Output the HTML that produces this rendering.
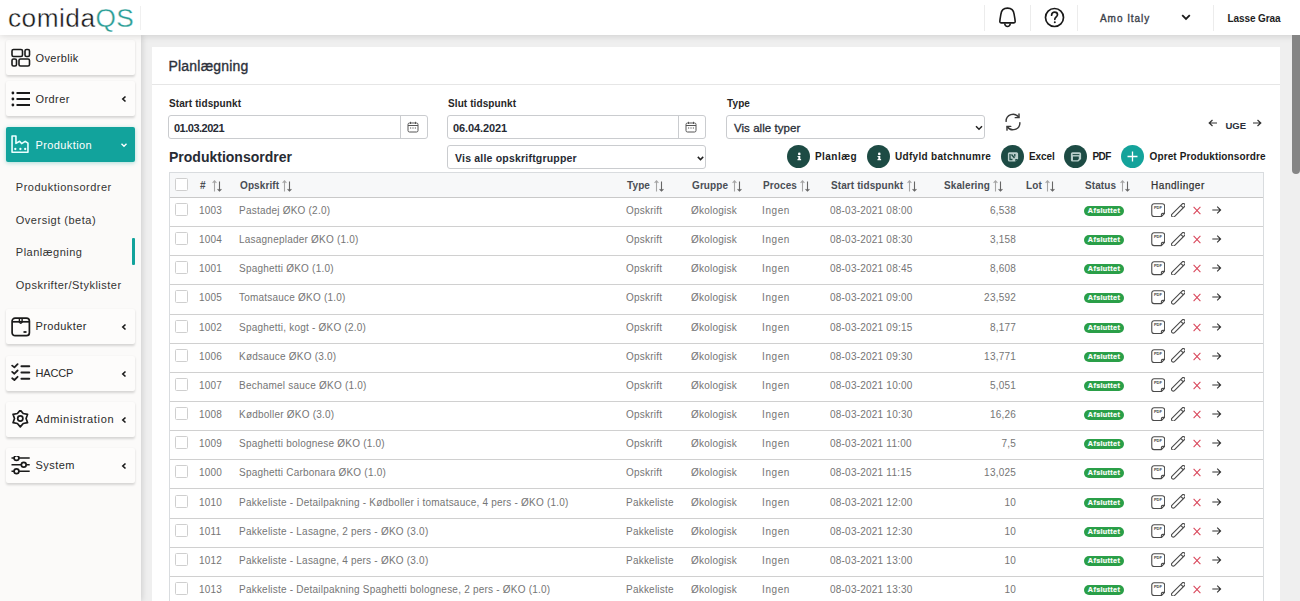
<!DOCTYPE html>
<html><head><meta charset="utf-8">
<style>
*{box-sizing:border-box;margin:0;padding:0}
html,body{width:1300px;height:601px;overflow:hidden;background:#efefef;font-family:"Liberation Sans",sans-serif;color:#222}
.abs{position:absolute}
#hdr{position:absolute;left:0;top:0;width:1300px;height:35px;background:#fff;z-index:5;box-shadow:0 1px 7px rgba(0,0,0,.14)}
#side{position:absolute;left:0;top:35px;width:141px;height:566px;background:#fbfaf9;z-index:3;box-shadow:1px 0 6px rgba(0,0,0,.15)}
#main{position:absolute;left:141px;top:35px;width:1159px;height:566px;background:#efefef;overflow:hidden}
#panel{position:absolute;left:11px;top:12px;width:1128px;height:600px;background:#fff}
#sb{position:absolute;left:1292px;top:35px;width:8px;height:139px;background:#858585;border-radius:0 0 4px 4px;z-index:6}
.box{position:absolute;left:6px;width:129px;height:35px;background:#fdfcfb;border-radius:2px;box-shadow:0 1.5px 2.5px rgba(0,0,0,.15)}
.box .lbl{position:absolute;left:29.5px;top:12px;font-size:11px;letter-spacing:.35px;color:#2a2a2a}
.box .chev{position:absolute;left:113.5px;top:13.5px;width:8px;height:8px}
.box svg.ic{position:absolute;left:5px;top:8px}
.sub{position:absolute;left:15.8px;font-size:11px;letter-spacing:.5px;color:#333}
.lab{position:absolute;font-weight:bold;font-size:10px;letter-spacing:.1px;color:#262626}
.inp{position:absolute;height:24px;border:1px solid #cacccf;border-radius:3px;background:#fff}
.inp .v{position:absolute;left:5px;top:6px;font-size:11px;color:#262a33;font-weight:bold;letter-spacing:-.1px}
.tbl{position:absolute;left:169px;top:172px;width:1095px;height:440px;border:1px solid #d9dcdf;border-bottom:0}
.th{position:absolute;left:0;top:0;width:1093px;height:25px;background:#f7f8f9;border-bottom:1px solid #c9c9c9}
.tr{position:absolute;left:0;width:1093px;height:29.15px;border-bottom:1px solid #d0d0d0}
.cell{position:absolute;white-space:nowrap}
.th .cell{top:7px;font-size:10px;font-weight:bold;color:#4a4e55;letter-spacing:.1px}
.tr .cell{top:7px;font-size:10px;color:#757575;letter-spacing:.22px}
.cb{position:absolute;left:5px;width:13px;height:13px;border:1px solid #cfcfcf;border-radius:1.5px;background:#fff}
.badge{position:absolute;left:915px;top:9px;width:40px;height:10px;border-radius:5px;background:#2a9f48;color:#fff;font-size:7.2px;font-weight:bold;text-align:center;line-height:10px;letter-spacing:.35px;-webkit-text-stroke:.15px #fff}
.srt{position:absolute;top:7px}
.ai{position:absolute;top:6px}
.circ{position:absolute;top:145px;width:23px;height:23px;border-radius:50%;background:#1d4b44}
.btxt{position:absolute;top:151px;font-size:10px;font-weight:bold;color:#1c1c1c;letter-spacing:-.1px}
</style></head><body>
<div id="hdr">
  <div class="abs" style="left:7.5px;top:4px;font-size:25px;letter-spacing:0.45px;color:#1a1a1a;transform:scaleX(1.05);transform-origin:0 0;-webkit-text-stroke:0.35px #fff">comida<span style="color:#2a9d95">QS</span></div>
  <div class="abs" style="left:140px;top:6px;width:1px;height:24px;background:#f0f0f0"></div>
  <div class="abs" style="left:984px;top:5px;width:1px;height:26px;background:#ececec"></div>
  <div class="abs" style="left:1030px;top:5px;width:1px;height:26px;background:#ececec"></div>
  <div class="abs" style="left:1077px;top:5px;width:1px;height:26px;background:#ececec"></div>
  <div class="abs" style="left:1213px;top:5px;width:1px;height:26px;background:#ececec"></div>
  <svg class="abs" style="left:998px;top:7px" width="20" height="21" viewBox="0 0 20 21"><path d="M1.8 14.6 C2 11.5 2.6 9.5 2.9 7.2 C3.3 3.6 5.8 1.1 9.5 1.1 C13.2 1.1 15.7 3.6 16.1 7.2 C16.4 9.5 17 11.5 17.2 14.6 C17.2 15.5 16.8 15.9 16 15.9 H3 C2.2 15.9 1.8 15.5 1.8 14.6 Z" fill="none" stroke="#1a1a1a" stroke-width="1.6" stroke-linejoin="round"/><path d="M6.6 16.3 C7 18.6 8.1 19.5 9.5 19.5 C10.9 19.5 12 18.6 12.4 16.3" fill="none" stroke="#1a1a1a" stroke-width="1.5"/></svg>
  <svg class="abs" style="left:1044px;top:7px" width="21" height="21" viewBox="0 0 21 21">
    <circle cx="10.5" cy="10.5" r="9" fill="none" stroke="#1a1a1a" stroke-width="1.7"/>
    <path d="M7.6 8.2 C7.6 6.2 9 5.2 10.6 5.2 C12.3 5.2 13.5 6.3 13.5 7.8 C13.5 9.8 10.8 10 10.8 12.3" fill="none" stroke="#1a1a1a" stroke-width="1.7" stroke-linecap="round"/>
    <circle cx="10.8" cy="15.3" r="1" fill="#1a1a1a"/>
  </svg>
  <div class="abs" style="left:1100px;top:13px;font-size:10px;letter-spacing:.95px;color:#3b3f4a;-webkit-text-stroke:.35px #3b3f4a">Amo Italy</div>
  <svg class="abs" style="left:1181px;top:14px" width="10" height="7" viewBox="0 0 10 7"><path d="M1.2 1.2 L5 5 L8.8 1.2" fill="none" stroke="#1a1a1a" stroke-width="1.8"/></svg>
  <div class="abs" style="left:1227.5px;top:13px;font-size:10px;color:#1e1e1e;font-weight:bold;letter-spacing:-.1px">Lasse Graa</div>
</div>

<div id="side">
  <div class="box" style="top:5px">
    <svg class="ic" width="20" height="20" viewBox="0 0 20 20"><g fill="none" stroke="#1a1a1a" stroke-width="1.6"><rect x="1" y="1.5" width="10.5" height="7" rx="1.5"/><rect x="14" y="1.5" width="4.5" height="7" rx="1.5"/><rect x="1" y="11" width="4.5" height="7" rx="1.5"/><rect x="8" y="11" width="10.5" height="7" rx="1.5"/></g></svg>
    <div class="lbl" style="letter-spacing:.36px">Overblik</div>
  </div>
  <div class="box" style="top:46px">
    <svg class="ic" width="20" height="20" viewBox="0 0 20 20"><g fill="#1a1a1a"><circle cx="1.9" cy="4" r="1.4"/><circle cx="1.9" cy="10" r="1.4"/><circle cx="1.9" cy="16" r="1.4"/></g><g stroke="#1a1a1a" stroke-width="1.8"><path d="M5.5 4H19M5.5 10H19M5.5 16H19"/></g></svg>
    <div class="lbl" style="letter-spacing:.42px">Ordrer</div>
    <svg class="chev" viewBox="0 0 8 8"><path d="M5.5 1.5 L2.8 4 L5.5 6.5" fill="none" stroke="#1a1a1a" stroke-width="1.6"/></svg>
  </div>
  <div class="box" style="top:92px;background:#12a39c;box-shadow:0 1px 4px rgba(18,163,156,.35)">
    <svg class="ic" width="20" height="21" viewBox="0 0 20 21"><g fill="none" stroke="#eaffff" stroke-width="1.6" stroke-linejoin="round"><path d="M1.05 17.2 V1.05 H4.95 V8.4 L8.6 6.3 L10.6 8.6 L14.2 6.3 L16.95 8.2 V17.2 Z"/></g><g fill="#eaffff"><circle cx="4.3" cy="14" r="1.15"/><circle cx="9.4" cy="14" r="1.15"/><circle cx="14.2" cy="14" r="1.15"/></g></svg>
    <div class="lbl" style="color:#fff;letter-spacing:.4px">Produktion</div>
    <svg class="chev" viewBox="0 0 8 8"><path d="M1.5 2.8 L4 5.2 L6.5 2.8" fill="none" stroke="#fff" stroke-width="1.4"/></svg>
  </div>
  <div class="sub" style="top:146px">Produktionsordrer</div>
  <div class="sub" style="top:179px">Oversigt (beta)</div>
  <div class="sub" style="top:211px">Planlægning</div>
  <div class="sub" style="top:243.5px">Opskrifter/Styklister</div>
  <div class="abs" style="left:132px;top:203px;width:3px;height:27px;background:#12a39c;border-radius:1px"></div>

  <div class="box" style="top:274px">
    <svg class="ic" width="20" height="20" viewBox="0 0 20 20"><g fill="none" stroke="#1a1a1a" stroke-width="1.7"><rect x="1.1" y="1.1" width="17.3" height="17.6" rx="3"/><path d="M1.1 4.8H18.4"/><path d="M8.4 1.2V5.2Q9.75 7.2 11.1 5.2V1.2" stroke-width="1.4"/></g><path d="M12.5 15H15.5" stroke="#1a1a1a" stroke-width="1.8"/></svg>
    <div class="lbl" style="top:11px;letter-spacing:.39px">Produkter</div>
    <svg class="chev" viewBox="0 0 8 8"><path d="M5.5 1.5 L2.8 4 L5.5 6.5" fill="none" stroke="#1a1a1a" stroke-width="1.6"/></svg>
  </div>
  <div class="box" style="top:321px">
    <svg class="ic" style="top:7px" width="20" height="20" viewBox="0 0 20 20"><g fill="none" stroke="#1f1f1f" stroke-linecap="round" stroke-linejoin="round"><path d="M1.2 2.6L3.4 4.4L6.6 1.2M1.2 8.9L3.4 10.7L6.6 7.5M1.2 15.2L3.4 17L6.6 13.8" stroke-width="1.8"/><path d="M10.4 3.25H18.3M10.4 9.5H18.3M10.4 15.75H18.3" stroke-width="1.9"/></g></svg>
    <div class="lbl" style="top:10.5px;letter-spacing:-.15px">HACCP</div>
    <svg class="chev" viewBox="0 0 8 8"><path d="M5.5 1.5 L2.8 4 L5.5 6.5" fill="none" stroke="#1a1a1a" stroke-width="1.6"/></svg>
  </div>
  <div class="box" style="top:367px">
    <svg class="ic" width="20" height="20" viewBox="0 0 20 20"><g fill="none" stroke="#1a1a1a" stroke-width="1.7" stroke-linejoin="round"><path d="M9.30 0.10 L12.20 3.48 L16.57 4.30 L15.10 8.50 L16.57 12.70 L12.20 13.52 L9.30 16.90 L6.40 13.52 L2.03 12.70 L3.50 8.50 L2.03 4.30 L6.40 3.48 Z"/><circle cx="9.3" cy="8.5" r="2.6"/></g></svg>
    <div class="lbl" style="top:11px;letter-spacing:.64px">Administration</div>
    <svg class="chev" viewBox="0 0 8 8"><path d="M5.5 1.5 L2.8 4 L5.5 6.5" fill="none" stroke="#1a1a1a" stroke-width="1.6"/></svg>
  </div>
  <div class="box" style="top:413px">
    <svg class="ic" width="20" height="20" viewBox="0 0 20 20"><g fill="none" stroke="#1a1a1a" stroke-width="1.7"><path d="M0.5 2H3M8 2H18.7M0.5 8.75H10.3M15.2 8.75H18.7M0.5 15.25H3M8 15.25H18.7"/><circle cx="5.5" cy="2" r="2.4"/><circle cx="12.75" cy="8.75" r="2.4"/><circle cx="5.5" cy="15.25" r="2.4"/></g></svg>
    <div class="lbl" style="top:11px;letter-spacing:.47px">System</div>
    <svg class="chev" viewBox="0 0 8 8"><path d="M5.5 1.5 L2.8 4 L5.5 6.5" fill="none" stroke="#1a1a1a" stroke-width="1.6"/></svg>
  </div>
</div>

<div id="main">
  <div id="panel"></div>
</div>
<div id="sb"></div>

<!-- panel content (absolute in page coords) -->
<div class="abs" style="left:152px;top:84px;width:1128px;height:1px;background:#e6e6e6"></div>
<div class="abs" style="left:168.5px;top:58px;font-size:14px;color:#2c313a;letter-spacing:.2px;-webkit-text-stroke:.35px #2c313a">Planlægning</div>

<div class="lab" style="left:169px;top:98px">Start tidspunkt</div>
<div class="lab" style="left:448px;top:98px">Slut tidspunkt</div>
<div class="lab" style="left:727px;top:98px">Type</div>

<div class="inp" style="left:168px;top:115px;width:260px"><div class="v" style="letter-spacing:-.5px">01.03.2021</div><div class="abs" style="left:230.5px;top:0;width:1px;height:22px;background:#cacccf"></div>
  <svg class="abs" style="left:238px;top:4.8px" width="12" height="12" viewBox="0 0 12 12"><g fill="none" stroke="#555" stroke-width="1"><rect x="1" y="2" width="10" height="9" rx="1.5"/><path d="M1 4.5H11M3.5 0.8V3M8.5 0.8V3"/></g><g fill="#555"><rect x="3" y="6.5" width="1.2" height="1"/><rect x="5.4" y="6.5" width="1.2" height="1"/><rect x="7.8" y="6.5" width="1.2" height="1"/></g></svg>
</div>
<div class="inp" style="left:447px;top:115px;width:259px"><div class="v">06.04.2021</div><div class="abs" style="left:229.5px;top:0;width:1px;height:22px;background:#cacccf"></div>
  <svg class="abs" style="left:237px;top:4.8px" width="12" height="12" viewBox="0 0 12 12"><g fill="none" stroke="#555" stroke-width="1"><rect x="1" y="2" width="10" height="9" rx="1.5"/><path d="M1 4.5H11M3.5 0.8V3M8.5 0.8V3"/></g><g fill="#555"><rect x="3" y="6.5" width="1.2" height="1"/><rect x="5.4" y="6.5" width="1.2" height="1"/><rect x="7.8" y="6.5" width="1.2" height="1"/></g></svg>
</div>
<div class="inp" style="left:726px;top:115px;width:259px"><div class="v" style="left:7px;font-weight:normal;font-size:11.5px;color:#2b2f38;letter-spacing:.05px;-webkit-text-stroke:.3px #2b2f38">Vis alle typer</div>
  <svg class="abs" style="left:248px;top:9px" width="8" height="6" viewBox="0 0 8 6"><path d="M1 1.2 L4 4.2 L7 1.2" fill="none" stroke="#222" stroke-width="1.5"/></svg>
</div>
<div class="inp" style="left:447px;top:145px;width:259px;height:24px"><div class="v" style="left:7px;font-weight:bold;font-size:10.5px;color:#262a33;letter-spacing:.2px">Vis alle opskriftgrupper</div>
  <svg class="abs" style="left:249px;top:9.5px" width="7" height="5" viewBox="0 0 7 5"><path d="M0.8 0.9 L3.5 3.6 L6.2 0.9" fill="none" stroke="#222" stroke-width="1.5"/></svg>
</div>
<div class="abs" style="left:169px;top:149px;font-size:14px;font-weight:bold;color:#272b33">Produktionsordrer</div>

<!-- refresh -->
<svg class="abs" style="left:1002.6px;top:112px" width="20" height="20" viewBox="0 0 16 16"><g fill="none" stroke="#3a3a3a" stroke-width="1.15" stroke-linecap="round"><path d="M2.5 7.5 A5.5 5.5 0 0 1 12.5 4.2"/><path d="M13.5 8.5 A5.5 5.5 0 0 1 3.5 11.8"/><path d="M12.8 1.5 V4.5 H9.8"/><path d="M3.2 14.5 V11.5 H6.2"/></g></svg>
<!-- UGE -->
<svg class="abs" style="left:1208px;top:118.5px" width="10" height="8" viewBox="0 0 10 8"><path d="M9 4H1.5M4.5 1L1.2 4L4.5 7" fill="none" stroke="#333" stroke-width="1.2"/></svg>
<div class="abs" style="left:1225.5px;top:119.5px;font-size:9.5px;font-weight:bold;color:#2a2f3a">UGE</div>
<svg class="abs" style="left:1252px;top:118.5px" width="10" height="8" viewBox="0 0 10 8"><path d="M1 4H8.5M5.5 1L8.8 4L5.5 7" fill="none" stroke="#333" stroke-width="1.2"/></svg>

<!-- action buttons -->
<div class="circ" style="left:787px"><svg class="abs" style="left:0;top:0" width="23" height="23" viewBox="0 0 23 23"><circle cx="12.3" cy="8.9" r="1.3" fill="#fff"/><path d="M10.5 10.9H13.3V14.1H14.1V15.3H10.5V14.1H11.3V12H10.5Z" fill="#fff"/></svg></div>
<div class="btxt" style="left:815px;letter-spacing:.45px">Planlæg</div>
<div class="circ" style="left:867px"><svg class="abs" style="left:0;top:0" width="23" height="23" viewBox="0 0 23 23"><circle cx="12.3" cy="8.9" r="1.3" fill="#fff"/><path d="M10.5 10.9H13.3V14.1H14.1V15.3H10.5V14.1H11.3V12H10.5Z" fill="#fff"/></svg></div>
<div class="btxt" style="left:895px;letter-spacing:.3px">Udfyld batchnumre</div>
<div class="circ" style="left:1001px"><svg class="abs" style="left:0;top:0" width="23" height="23" viewBox="0 0 23 23"><path d="M8.5 7.2H15.5A1.6 1.6 0 0 1 17.1 8.8V14L14.3 16.6H8.5A1.6 1.6 0 0 1 6.9 15V8.8A1.6 1.6 0 0 1 8.5 7.2Z" fill="#b9cfcb"/><path d="M9 9V14.5H11.5M10.5 9.5L13.5 13M13.8 9V11.5" fill="none" stroke="#1d4b44" stroke-width="1.3"/><path d="M14.3 16.6V14H17.1Z" fill="#1d4b44"/></svg></div>
<div class="btxt" style="left:1029px">Excel</div>
<div class="circ" style="left:1064px"><svg class="abs" style="left:0;top:0" width="23" height="23" viewBox="0 0 23 23"><path d="M8.5 7.2H15.5A1.6 1.6 0 0 1 17.1 8.8V14L14.3 16.6H8.5A1.6 1.6 0 0 1 6.9 15V8.8A1.6 1.6 0 0 1 8.5 7.2Z" fill="#b9cfcb"/><path d="M8.6 9.6H15.4" stroke="#1d4b44" stroke-width="1"/><path d="M9 11.5H14.8V14L13.5 15.2H9Z" fill="#1d4b44"/></svg></div>
<div class="btxt" style="left:1092.5px;letter-spacing:-.6px">PDF</div>
<div class="circ" style="left:1121px;background:#14a39b"><svg class="abs" style="left:5px;top:5px" width="13" height="13" viewBox="0 0 13 13"><path d="M6.5 1.5V11.5M1.5 6.5H11.5" stroke="#fff" stroke-width="1.3"/></svg></div>
<div class="btxt" style="left:1149.5px;letter-spacing:.13px">Opret Produktionsordre</div>

<div class="tbl" id="tbl">
  <div class="th">
    <div class="cb" style="top:5px"></div>
    <div class="cell" style="left:30px">#</div>
    <div class="cell" style="left:70px">Opskrift</div>
    <div class="cell" style="left:457px">Type</div>
    <div class="cell" style="left:522px">Gruppe</div>
    <div class="cell" style="left:593px">Proces</div>
    <div class="cell" style="left:661px">Start tidspunkt</div>
    <div class="cell" style="left:774px">Skalering</div>
    <div class="cell" style="left:856px">Lot</div>
    <div class="cell" style="left:915px">Status</div>
    <div class="cell" style="left:981px;font-weight:normal;color:#333;letter-spacing:.55px;-webkit-text-stroke:.25px #333">Handlinger</div>
<svg class="srt" style="left:42px" width="11" height="12" viewBox="0 0 11 12"><g fill="none" stroke-width="1.1"><path d="M2.5 11.5V0.8M0.6 2.8L2.5 0.9L4.4 2.8" stroke="#a5a5a5"/><path d="M7.5 1.5V11M5.6 9.1L7.5 11L9.4 9.1" stroke="#666"/></g></svg>
<svg class="srt" style="left:112px" width="11" height="12" viewBox="0 0 11 12"><g fill="none" stroke-width="1.1"><path d="M2.5 11.5V0.8M0.6 2.8L2.5 0.9L4.4 2.8" stroke="#a5a5a5"/><path d="M7.5 1.5V11M5.6 9.1L7.5 11L9.4 9.1" stroke="#666"/></g></svg>
<svg class="srt" style="left:484px" width="11" height="12" viewBox="0 0 11 12"><g fill="none" stroke-width="1.1"><path d="M2.5 11.5V0.8M0.6 2.8L2.5 0.9L4.4 2.8" stroke="#a5a5a5"/><path d="M7.5 1.5V11M5.6 9.1L7.5 11L9.4 9.1" stroke="#666"/></g></svg>
<svg class="srt" style="left:562px" width="11" height="12" viewBox="0 0 11 12"><g fill="none" stroke-width="1.1"><path d="M2.5 11.5V0.8M0.6 2.8L2.5 0.9L4.4 2.8" stroke="#a5a5a5"/><path d="M7.5 1.5V11M5.6 9.1L7.5 11L9.4 9.1" stroke="#666"/></g></svg>
<svg class="srt" style="left:630px" width="11" height="12" viewBox="0 0 11 12"><g fill="none" stroke-width="1.1"><path d="M2.5 11.5V0.8M0.6 2.8L2.5 0.9L4.4 2.8" stroke="#a5a5a5"/><path d="M7.5 1.5V11M5.6 9.1L7.5 11L9.4 9.1" stroke="#666"/></g></svg>
<svg class="srt" style="left:737px" width="11" height="12" viewBox="0 0 11 12"><g fill="none" stroke-width="1.1"><path d="M2.5 11.5V0.8M0.6 2.8L2.5 0.9L4.4 2.8" stroke="#a5a5a5"/><path d="M7.5 1.5V11M5.6 9.1L7.5 11L9.4 9.1" stroke="#666"/></g></svg>
<svg class="srt" style="left:823px" width="11" height="12" viewBox="0 0 11 12"><g fill="none" stroke-width="1.1"><path d="M2.5 11.5V0.8M0.6 2.8L2.5 0.9L4.4 2.8" stroke="#a5a5a5"/><path d="M7.5 1.5V11M5.6 9.1L7.5 11L9.4 9.1" stroke="#666"/></g></svg>
<svg class="srt" style="left:875px" width="11" height="12" viewBox="0 0 11 12"><g fill="none" stroke-width="1.1"><path d="M2.5 11.5V0.8M0.6 2.8L2.5 0.9L4.4 2.8" stroke="#a5a5a5"/><path d="M7.5 1.5V11M5.6 9.1L7.5 11L9.4 9.1" stroke="#666"/></g></svg>
<svg class="srt" style="left:950px" width="11" height="12" viewBox="0 0 11 12"><g fill="none" stroke-width="1.1"><path d="M2.5 11.5V0.8M0.6 2.8L2.5 0.9L4.4 2.8" stroke="#a5a5a5"/><path d="M7.5 1.5V11M5.6 9.1L7.5 11L9.4 9.1" stroke="#666"/></g></svg>
  </div>
<div class="tr" style="top:25.00px"><div class="cb" style="top:5px"></div><div class="cell" style="left:29px">1003</div><div class="cell" style="left:69px">Pastadej ØKO (2.0)</div><div class="cell" style="left:456px">Opskrift</div><div class="cell" style="left:521px">Økologisk</div><div class="cell" style="left:592px;letter-spacing:.6px">Ingen</div><div class="cell" style="left:660px">08-03-2021 08:00</div><div class="cell" style="right:247px;text-align:right">6,538</div><div class="badge" style="left:914px;top:8px">Afsluttet</div><svg class="ai" style="left:981px;top:5px" width="14.4" height="14.4" viewBox="0 0 15 15"><g fill="none" stroke="#4a4a4a" stroke-width="1.15" stroke-linejoin="round"><path d="M3.2 0.8H11.8A2.4 2.4 0 0 1 14.2 3.2V10.8L10.8 14.2H3.2A2.4 2.4 0 0 1 0.8 11.8V3.2A2.4 2.4 0 0 1 3.2 0.8Z"/><path d="M14.2 10.8H12.3A1.5 1.5 0 0 0 10.8 12.3V14.2"/></g><text x="3" y="6" font-size="4.2" fill="#444" font-weight="bold" font-family="Liberation Sans">PDF</text></svg><svg class="ai" style="left:1000.5px;top:4.6px" width="14.6" height="14.6" viewBox="0 0 15 15"><g fill="none" stroke="#4a4a4a" stroke-width="1.15"><rect x="5.7" y="-1.6" width="3.6" height="18.2" rx="1.8" transform="rotate(45 7.5 7.5)"/><path d="M10.3 2.6L12.4 4.7"/></g></svg><svg class="ai" style="left:1023px;top:8px" width="8" height="9" viewBox="0 0 8 9"><path d="M0.6 0.8L7.4 8.2M7.4 0.8L0.6 8.2" stroke="#d9475b" stroke-width="1.05"/></svg><svg class="ai" style="left:1042px;top:8px" width="9.5" height="8" viewBox="0 0 9.5 8"><path d="M0.3 4H8.6M5.2 0.7L8.6 4L5.2 7.3" fill="none" stroke="#333" stroke-width="1.1"/></svg></div>
<div class="tr" style="top:54.15px"><div class="cb" style="top:5px"></div><div class="cell" style="left:29px">1004</div><div class="cell" style="left:69px">Lasagneplader ØKO (1.0)</div><div class="cell" style="left:456px">Opskrift</div><div class="cell" style="left:521px">Økologisk</div><div class="cell" style="left:592px;letter-spacing:.6px">Ingen</div><div class="cell" style="left:660px">08-03-2021 08:30</div><div class="cell" style="right:247px;text-align:right">3,158</div><div class="badge" style="left:914px;top:8px">Afsluttet</div><svg class="ai" style="left:981px;top:5px" width="14.4" height="14.4" viewBox="0 0 15 15"><g fill="none" stroke="#4a4a4a" stroke-width="1.15" stroke-linejoin="round"><path d="M3.2 0.8H11.8A2.4 2.4 0 0 1 14.2 3.2V10.8L10.8 14.2H3.2A2.4 2.4 0 0 1 0.8 11.8V3.2A2.4 2.4 0 0 1 3.2 0.8Z"/><path d="M14.2 10.8H12.3A1.5 1.5 0 0 0 10.8 12.3V14.2"/></g><text x="3" y="6" font-size="4.2" fill="#444" font-weight="bold" font-family="Liberation Sans">PDF</text></svg><svg class="ai" style="left:1000.5px;top:4.6px" width="14.6" height="14.6" viewBox="0 0 15 15"><g fill="none" stroke="#4a4a4a" stroke-width="1.15"><rect x="5.7" y="-1.6" width="3.6" height="18.2" rx="1.8" transform="rotate(45 7.5 7.5)"/><path d="M10.3 2.6L12.4 4.7"/></g></svg><svg class="ai" style="left:1023px;top:8px" width="8" height="9" viewBox="0 0 8 9"><path d="M0.6 0.8L7.4 8.2M7.4 0.8L0.6 8.2" stroke="#d9475b" stroke-width="1.05"/></svg><svg class="ai" style="left:1042px;top:8px" width="9.5" height="8" viewBox="0 0 9.5 8"><path d="M0.3 4H8.6M5.2 0.7L8.6 4L5.2 7.3" fill="none" stroke="#333" stroke-width="1.1"/></svg></div>
<div class="tr" style="top:83.30px"><div class="cb" style="top:5px"></div><div class="cell" style="left:29px">1001</div><div class="cell" style="left:69px">Spaghetti ØKO (1.0)</div><div class="cell" style="left:456px">Opskrift</div><div class="cell" style="left:521px">Økologisk</div><div class="cell" style="left:592px;letter-spacing:.6px">Ingen</div><div class="cell" style="left:660px">08-03-2021 08:45</div><div class="cell" style="right:247px;text-align:right">8,608</div><div class="badge" style="left:914px;top:8px">Afsluttet</div><svg class="ai" style="left:981px;top:5px" width="14.4" height="14.4" viewBox="0 0 15 15"><g fill="none" stroke="#4a4a4a" stroke-width="1.15" stroke-linejoin="round"><path d="M3.2 0.8H11.8A2.4 2.4 0 0 1 14.2 3.2V10.8L10.8 14.2H3.2A2.4 2.4 0 0 1 0.8 11.8V3.2A2.4 2.4 0 0 1 3.2 0.8Z"/><path d="M14.2 10.8H12.3A1.5 1.5 0 0 0 10.8 12.3V14.2"/></g><text x="3" y="6" font-size="4.2" fill="#444" font-weight="bold" font-family="Liberation Sans">PDF</text></svg><svg class="ai" style="left:1000.5px;top:4.6px" width="14.6" height="14.6" viewBox="0 0 15 15"><g fill="none" stroke="#4a4a4a" stroke-width="1.15"><rect x="5.7" y="-1.6" width="3.6" height="18.2" rx="1.8" transform="rotate(45 7.5 7.5)"/><path d="M10.3 2.6L12.4 4.7"/></g></svg><svg class="ai" style="left:1023px;top:8px" width="8" height="9" viewBox="0 0 8 9"><path d="M0.6 0.8L7.4 8.2M7.4 0.8L0.6 8.2" stroke="#d9475b" stroke-width="1.05"/></svg><svg class="ai" style="left:1042px;top:8px" width="9.5" height="8" viewBox="0 0 9.5 8"><path d="M0.3 4H8.6M5.2 0.7L8.6 4L5.2 7.3" fill="none" stroke="#333" stroke-width="1.1"/></svg></div>
<div class="tr" style="top:112.45px"><div class="cb" style="top:5px"></div><div class="cell" style="left:29px">1005</div><div class="cell" style="left:69px">Tomatsauce ØKO (1.0)</div><div class="cell" style="left:456px">Opskrift</div><div class="cell" style="left:521px">Økologisk</div><div class="cell" style="left:592px;letter-spacing:.6px">Ingen</div><div class="cell" style="left:660px">08-03-2021 09:00</div><div class="cell" style="right:247px;text-align:right">23,592</div><div class="badge" style="left:914px;top:8px">Afsluttet</div><svg class="ai" style="left:981px;top:5px" width="14.4" height="14.4" viewBox="0 0 15 15"><g fill="none" stroke="#4a4a4a" stroke-width="1.15" stroke-linejoin="round"><path d="M3.2 0.8H11.8A2.4 2.4 0 0 1 14.2 3.2V10.8L10.8 14.2H3.2A2.4 2.4 0 0 1 0.8 11.8V3.2A2.4 2.4 0 0 1 3.2 0.8Z"/><path d="M14.2 10.8H12.3A1.5 1.5 0 0 0 10.8 12.3V14.2"/></g><text x="3" y="6" font-size="4.2" fill="#444" font-weight="bold" font-family="Liberation Sans">PDF</text></svg><svg class="ai" style="left:1000.5px;top:4.6px" width="14.6" height="14.6" viewBox="0 0 15 15"><g fill="none" stroke="#4a4a4a" stroke-width="1.15"><rect x="5.7" y="-1.6" width="3.6" height="18.2" rx="1.8" transform="rotate(45 7.5 7.5)"/><path d="M10.3 2.6L12.4 4.7"/></g></svg><svg class="ai" style="left:1023px;top:8px" width="8" height="9" viewBox="0 0 8 9"><path d="M0.6 0.8L7.4 8.2M7.4 0.8L0.6 8.2" stroke="#d9475b" stroke-width="1.05"/></svg><svg class="ai" style="left:1042px;top:8px" width="9.5" height="8" viewBox="0 0 9.5 8"><path d="M0.3 4H8.6M5.2 0.7L8.6 4L5.2 7.3" fill="none" stroke="#333" stroke-width="1.1"/></svg></div>
<div class="tr" style="top:141.60px"><div class="cb" style="top:5px"></div><div class="cell" style="left:29px">1002</div><div class="cell" style="left:69px">Spaghetti, kogt - ØKO (2.0)</div><div class="cell" style="left:456px">Opskrift</div><div class="cell" style="left:521px">Økologisk</div><div class="cell" style="left:592px;letter-spacing:.6px">Ingen</div><div class="cell" style="left:660px">08-03-2021 09:15</div><div class="cell" style="right:247px;text-align:right">8,177</div><div class="badge" style="left:914px;top:8px">Afsluttet</div><svg class="ai" style="left:981px;top:5px" width="14.4" height="14.4" viewBox="0 0 15 15"><g fill="none" stroke="#4a4a4a" stroke-width="1.15" stroke-linejoin="round"><path d="M3.2 0.8H11.8A2.4 2.4 0 0 1 14.2 3.2V10.8L10.8 14.2H3.2A2.4 2.4 0 0 1 0.8 11.8V3.2A2.4 2.4 0 0 1 3.2 0.8Z"/><path d="M14.2 10.8H12.3A1.5 1.5 0 0 0 10.8 12.3V14.2"/></g><text x="3" y="6" font-size="4.2" fill="#444" font-weight="bold" font-family="Liberation Sans">PDF</text></svg><svg class="ai" style="left:1000.5px;top:4.6px" width="14.6" height="14.6" viewBox="0 0 15 15"><g fill="none" stroke="#4a4a4a" stroke-width="1.15"><rect x="5.7" y="-1.6" width="3.6" height="18.2" rx="1.8" transform="rotate(45 7.5 7.5)"/><path d="M10.3 2.6L12.4 4.7"/></g></svg><svg class="ai" style="left:1023px;top:8px" width="8" height="9" viewBox="0 0 8 9"><path d="M0.6 0.8L7.4 8.2M7.4 0.8L0.6 8.2" stroke="#d9475b" stroke-width="1.05"/></svg><svg class="ai" style="left:1042px;top:8px" width="9.5" height="8" viewBox="0 0 9.5 8"><path d="M0.3 4H8.6M5.2 0.7L8.6 4L5.2 7.3" fill="none" stroke="#333" stroke-width="1.1"/></svg></div>
<div class="tr" style="top:170.75px"><div class="cb" style="top:5px"></div><div class="cell" style="left:29px">1006</div><div class="cell" style="left:69px">Kødsauce ØKO (3.0)</div><div class="cell" style="left:456px">Opskrift</div><div class="cell" style="left:521px">Økologisk</div><div class="cell" style="left:592px;letter-spacing:.6px">Ingen</div><div class="cell" style="left:660px">08-03-2021 09:30</div><div class="cell" style="right:247px;text-align:right">13,771</div><div class="badge" style="left:914px;top:8px">Afsluttet</div><svg class="ai" style="left:981px;top:5px" width="14.4" height="14.4" viewBox="0 0 15 15"><g fill="none" stroke="#4a4a4a" stroke-width="1.15" stroke-linejoin="round"><path d="M3.2 0.8H11.8A2.4 2.4 0 0 1 14.2 3.2V10.8L10.8 14.2H3.2A2.4 2.4 0 0 1 0.8 11.8V3.2A2.4 2.4 0 0 1 3.2 0.8Z"/><path d="M14.2 10.8H12.3A1.5 1.5 0 0 0 10.8 12.3V14.2"/></g><text x="3" y="6" font-size="4.2" fill="#444" font-weight="bold" font-family="Liberation Sans">PDF</text></svg><svg class="ai" style="left:1000.5px;top:4.6px" width="14.6" height="14.6" viewBox="0 0 15 15"><g fill="none" stroke="#4a4a4a" stroke-width="1.15"><rect x="5.7" y="-1.6" width="3.6" height="18.2" rx="1.8" transform="rotate(45 7.5 7.5)"/><path d="M10.3 2.6L12.4 4.7"/></g></svg><svg class="ai" style="left:1023px;top:8px" width="8" height="9" viewBox="0 0 8 9"><path d="M0.6 0.8L7.4 8.2M7.4 0.8L0.6 8.2" stroke="#d9475b" stroke-width="1.05"/></svg><svg class="ai" style="left:1042px;top:8px" width="9.5" height="8" viewBox="0 0 9.5 8"><path d="M0.3 4H8.6M5.2 0.7L8.6 4L5.2 7.3" fill="none" stroke="#333" stroke-width="1.1"/></svg></div>
<div class="tr" style="top:199.90px"><div class="cb" style="top:5px"></div><div class="cell" style="left:29px">1007</div><div class="cell" style="left:69px">Bechamel sauce ØKO (1.0)</div><div class="cell" style="left:456px">Opskrift</div><div class="cell" style="left:521px">Økologisk</div><div class="cell" style="left:592px;letter-spacing:.6px">Ingen</div><div class="cell" style="left:660px">08-03-2021 10:00</div><div class="cell" style="right:247px;text-align:right">5,051</div><div class="badge" style="left:914px;top:8px">Afsluttet</div><svg class="ai" style="left:981px;top:5px" width="14.4" height="14.4" viewBox="0 0 15 15"><g fill="none" stroke="#4a4a4a" stroke-width="1.15" stroke-linejoin="round"><path d="M3.2 0.8H11.8A2.4 2.4 0 0 1 14.2 3.2V10.8L10.8 14.2H3.2A2.4 2.4 0 0 1 0.8 11.8V3.2A2.4 2.4 0 0 1 3.2 0.8Z"/><path d="M14.2 10.8H12.3A1.5 1.5 0 0 0 10.8 12.3V14.2"/></g><text x="3" y="6" font-size="4.2" fill="#444" font-weight="bold" font-family="Liberation Sans">PDF</text></svg><svg class="ai" style="left:1000.5px;top:4.6px" width="14.6" height="14.6" viewBox="0 0 15 15"><g fill="none" stroke="#4a4a4a" stroke-width="1.15"><rect x="5.7" y="-1.6" width="3.6" height="18.2" rx="1.8" transform="rotate(45 7.5 7.5)"/><path d="M10.3 2.6L12.4 4.7"/></g></svg><svg class="ai" style="left:1023px;top:8px" width="8" height="9" viewBox="0 0 8 9"><path d="M0.6 0.8L7.4 8.2M7.4 0.8L0.6 8.2" stroke="#d9475b" stroke-width="1.05"/></svg><svg class="ai" style="left:1042px;top:8px" width="9.5" height="8" viewBox="0 0 9.5 8"><path d="M0.3 4H8.6M5.2 0.7L8.6 4L5.2 7.3" fill="none" stroke="#333" stroke-width="1.1"/></svg></div>
<div class="tr" style="top:229.05px"><div class="cb" style="top:5px"></div><div class="cell" style="left:29px">1008</div><div class="cell" style="left:69px">Kødboller ØKO (3.0)</div><div class="cell" style="left:456px">Opskrift</div><div class="cell" style="left:521px">Økologisk</div><div class="cell" style="left:592px;letter-spacing:.6px">Ingen</div><div class="cell" style="left:660px">08-03-2021 10:30</div><div class="cell" style="right:247px;text-align:right">16,26</div><div class="badge" style="left:914px;top:8px">Afsluttet</div><svg class="ai" style="left:981px;top:5px" width="14.4" height="14.4" viewBox="0 0 15 15"><g fill="none" stroke="#4a4a4a" stroke-width="1.15" stroke-linejoin="round"><path d="M3.2 0.8H11.8A2.4 2.4 0 0 1 14.2 3.2V10.8L10.8 14.2H3.2A2.4 2.4 0 0 1 0.8 11.8V3.2A2.4 2.4 0 0 1 3.2 0.8Z"/><path d="M14.2 10.8H12.3A1.5 1.5 0 0 0 10.8 12.3V14.2"/></g><text x="3" y="6" font-size="4.2" fill="#444" font-weight="bold" font-family="Liberation Sans">PDF</text></svg><svg class="ai" style="left:1000.5px;top:4.6px" width="14.6" height="14.6" viewBox="0 0 15 15"><g fill="none" stroke="#4a4a4a" stroke-width="1.15"><rect x="5.7" y="-1.6" width="3.6" height="18.2" rx="1.8" transform="rotate(45 7.5 7.5)"/><path d="M10.3 2.6L12.4 4.7"/></g></svg><svg class="ai" style="left:1023px;top:8px" width="8" height="9" viewBox="0 0 8 9"><path d="M0.6 0.8L7.4 8.2M7.4 0.8L0.6 8.2" stroke="#d9475b" stroke-width="1.05"/></svg><svg class="ai" style="left:1042px;top:8px" width="9.5" height="8" viewBox="0 0 9.5 8"><path d="M0.3 4H8.6M5.2 0.7L8.6 4L5.2 7.3" fill="none" stroke="#333" stroke-width="1.1"/></svg></div>
<div class="tr" style="top:258.20px"><div class="cb" style="top:5px"></div><div class="cell" style="left:29px">1009</div><div class="cell" style="left:69px">Spaghetti bolognese ØKO (1.0)</div><div class="cell" style="left:456px">Opskrift</div><div class="cell" style="left:521px">Økologisk</div><div class="cell" style="left:592px;letter-spacing:.6px">Ingen</div><div class="cell" style="left:660px">08-03-2021 11:00</div><div class="cell" style="right:247px;text-align:right">7,5</div><div class="badge" style="left:914px;top:8px">Afsluttet</div><svg class="ai" style="left:981px;top:5px" width="14.4" height="14.4" viewBox="0 0 15 15"><g fill="none" stroke="#4a4a4a" stroke-width="1.15" stroke-linejoin="round"><path d="M3.2 0.8H11.8A2.4 2.4 0 0 1 14.2 3.2V10.8L10.8 14.2H3.2A2.4 2.4 0 0 1 0.8 11.8V3.2A2.4 2.4 0 0 1 3.2 0.8Z"/><path d="M14.2 10.8H12.3A1.5 1.5 0 0 0 10.8 12.3V14.2"/></g><text x="3" y="6" font-size="4.2" fill="#444" font-weight="bold" font-family="Liberation Sans">PDF</text></svg><svg class="ai" style="left:1000.5px;top:4.6px" width="14.6" height="14.6" viewBox="0 0 15 15"><g fill="none" stroke="#4a4a4a" stroke-width="1.15"><rect x="5.7" y="-1.6" width="3.6" height="18.2" rx="1.8" transform="rotate(45 7.5 7.5)"/><path d="M10.3 2.6L12.4 4.7"/></g></svg><svg class="ai" style="left:1023px;top:8px" width="8" height="9" viewBox="0 0 8 9"><path d="M0.6 0.8L7.4 8.2M7.4 0.8L0.6 8.2" stroke="#d9475b" stroke-width="1.05"/></svg><svg class="ai" style="left:1042px;top:8px" width="9.5" height="8" viewBox="0 0 9.5 8"><path d="M0.3 4H8.6M5.2 0.7L8.6 4L5.2 7.3" fill="none" stroke="#333" stroke-width="1.1"/></svg></div>
<div class="tr" style="top:287.35px"><div class="cb" style="top:5px"></div><div class="cell" style="left:29px">1000</div><div class="cell" style="left:69px">Spaghetti Carbonara ØKO (1.0)</div><div class="cell" style="left:456px">Opskrift</div><div class="cell" style="left:521px">Økologisk</div><div class="cell" style="left:592px;letter-spacing:.6px">Ingen</div><div class="cell" style="left:660px">08-03-2021 11:15</div><div class="cell" style="right:247px;text-align:right">13,025</div><div class="badge" style="left:914px;top:8px">Afsluttet</div><svg class="ai" style="left:981px;top:5px" width="14.4" height="14.4" viewBox="0 0 15 15"><g fill="none" stroke="#4a4a4a" stroke-width="1.15" stroke-linejoin="round"><path d="M3.2 0.8H11.8A2.4 2.4 0 0 1 14.2 3.2V10.8L10.8 14.2H3.2A2.4 2.4 0 0 1 0.8 11.8V3.2A2.4 2.4 0 0 1 3.2 0.8Z"/><path d="M14.2 10.8H12.3A1.5 1.5 0 0 0 10.8 12.3V14.2"/></g><text x="3" y="6" font-size="4.2" fill="#444" font-weight="bold" font-family="Liberation Sans">PDF</text></svg><svg class="ai" style="left:1000.5px;top:4.6px" width="14.6" height="14.6" viewBox="0 0 15 15"><g fill="none" stroke="#4a4a4a" stroke-width="1.15"><rect x="5.7" y="-1.6" width="3.6" height="18.2" rx="1.8" transform="rotate(45 7.5 7.5)"/><path d="M10.3 2.6L12.4 4.7"/></g></svg><svg class="ai" style="left:1023px;top:8px" width="8" height="9" viewBox="0 0 8 9"><path d="M0.6 0.8L7.4 8.2M7.4 0.8L0.6 8.2" stroke="#d9475b" stroke-width="1.05"/></svg><svg class="ai" style="left:1042px;top:8px" width="9.5" height="8" viewBox="0 0 9.5 8"><path d="M0.3 4H8.6M5.2 0.7L8.6 4L5.2 7.3" fill="none" stroke="#333" stroke-width="1.1"/></svg></div>
<div class="tr" style="top:316.50px"><div class="cb" style="top:5px"></div><div class="cell" style="left:29px">1010</div><div class="cell" style="left:69px">Pakkeliste - Detailpakning - Kødboller i tomatsauce, 4 pers - ØKO (1.0)</div><div class="cell" style="left:456px">Pakkeliste</div><div class="cell" style="left:521px">Økologisk</div><div class="cell" style="left:592px;letter-spacing:.6px">Ingen</div><div class="cell" style="left:660px">08-03-2021 12:00</div><div class="cell" style="right:247px;text-align:right">10</div><div class="badge" style="left:914px;top:8px">Afsluttet</div><svg class="ai" style="left:981px;top:5px" width="14.4" height="14.4" viewBox="0 0 15 15"><g fill="none" stroke="#4a4a4a" stroke-width="1.15" stroke-linejoin="round"><path d="M3.2 0.8H11.8A2.4 2.4 0 0 1 14.2 3.2V10.8L10.8 14.2H3.2A2.4 2.4 0 0 1 0.8 11.8V3.2A2.4 2.4 0 0 1 3.2 0.8Z"/><path d="M14.2 10.8H12.3A1.5 1.5 0 0 0 10.8 12.3V14.2"/></g><text x="3" y="6" font-size="4.2" fill="#444" font-weight="bold" font-family="Liberation Sans">PDF</text></svg><svg class="ai" style="left:1000.5px;top:4.6px" width="14.6" height="14.6" viewBox="0 0 15 15"><g fill="none" stroke="#4a4a4a" stroke-width="1.15"><rect x="5.7" y="-1.6" width="3.6" height="18.2" rx="1.8" transform="rotate(45 7.5 7.5)"/><path d="M10.3 2.6L12.4 4.7"/></g></svg><svg class="ai" style="left:1023px;top:8px" width="8" height="9" viewBox="0 0 8 9"><path d="M0.6 0.8L7.4 8.2M7.4 0.8L0.6 8.2" stroke="#d9475b" stroke-width="1.05"/></svg><svg class="ai" style="left:1042px;top:8px" width="9.5" height="8" viewBox="0 0 9.5 8"><path d="M0.3 4H8.6M5.2 0.7L8.6 4L5.2 7.3" fill="none" stroke="#333" stroke-width="1.1"/></svg></div>
<div class="tr" style="top:345.65px"><div class="cb" style="top:5px"></div><div class="cell" style="left:29px">1011</div><div class="cell" style="left:69px">Pakkeliste - Lasagne, 2 pers - ØKO (3.0)</div><div class="cell" style="left:456px">Pakkeliste</div><div class="cell" style="left:521px">Økologisk</div><div class="cell" style="left:592px;letter-spacing:.6px">Ingen</div><div class="cell" style="left:660px">08-03-2021 12:30</div><div class="cell" style="right:247px;text-align:right">10</div><div class="badge" style="left:914px;top:8px">Afsluttet</div><svg class="ai" style="left:981px;top:5px" width="14.4" height="14.4" viewBox="0 0 15 15"><g fill="none" stroke="#4a4a4a" stroke-width="1.15" stroke-linejoin="round"><path d="M3.2 0.8H11.8A2.4 2.4 0 0 1 14.2 3.2V10.8L10.8 14.2H3.2A2.4 2.4 0 0 1 0.8 11.8V3.2A2.4 2.4 0 0 1 3.2 0.8Z"/><path d="M14.2 10.8H12.3A1.5 1.5 0 0 0 10.8 12.3V14.2"/></g><text x="3" y="6" font-size="4.2" fill="#444" font-weight="bold" font-family="Liberation Sans">PDF</text></svg><svg class="ai" style="left:1000.5px;top:4.6px" width="14.6" height="14.6" viewBox="0 0 15 15"><g fill="none" stroke="#4a4a4a" stroke-width="1.15"><rect x="5.7" y="-1.6" width="3.6" height="18.2" rx="1.8" transform="rotate(45 7.5 7.5)"/><path d="M10.3 2.6L12.4 4.7"/></g></svg><svg class="ai" style="left:1023px;top:8px" width="8" height="9" viewBox="0 0 8 9"><path d="M0.6 0.8L7.4 8.2M7.4 0.8L0.6 8.2" stroke="#d9475b" stroke-width="1.05"/></svg><svg class="ai" style="left:1042px;top:8px" width="9.5" height="8" viewBox="0 0 9.5 8"><path d="M0.3 4H8.6M5.2 0.7L8.6 4L5.2 7.3" fill="none" stroke="#333" stroke-width="1.1"/></svg></div>
<div class="tr" style="top:374.80px"><div class="cb" style="top:5px"></div><div class="cell" style="left:29px">1012</div><div class="cell" style="left:69px">Pakkeliste - Lasagne, 4 pers - ØKO (3.0)</div><div class="cell" style="left:456px">Pakkeliste</div><div class="cell" style="left:521px">Økologisk</div><div class="cell" style="left:592px;letter-spacing:.6px">Ingen</div><div class="cell" style="left:660px">08-03-2021 13:00</div><div class="cell" style="right:247px;text-align:right">10</div><div class="badge" style="left:914px;top:8px">Afsluttet</div><svg class="ai" style="left:981px;top:5px" width="14.4" height="14.4" viewBox="0 0 15 15"><g fill="none" stroke="#4a4a4a" stroke-width="1.15" stroke-linejoin="round"><path d="M3.2 0.8H11.8A2.4 2.4 0 0 1 14.2 3.2V10.8L10.8 14.2H3.2A2.4 2.4 0 0 1 0.8 11.8V3.2A2.4 2.4 0 0 1 3.2 0.8Z"/><path d="M14.2 10.8H12.3A1.5 1.5 0 0 0 10.8 12.3V14.2"/></g><text x="3" y="6" font-size="4.2" fill="#444" font-weight="bold" font-family="Liberation Sans">PDF</text></svg><svg class="ai" style="left:1000.5px;top:4.6px" width="14.6" height="14.6" viewBox="0 0 15 15"><g fill="none" stroke="#4a4a4a" stroke-width="1.15"><rect x="5.7" y="-1.6" width="3.6" height="18.2" rx="1.8" transform="rotate(45 7.5 7.5)"/><path d="M10.3 2.6L12.4 4.7"/></g></svg><svg class="ai" style="left:1023px;top:8px" width="8" height="9" viewBox="0 0 8 9"><path d="M0.6 0.8L7.4 8.2M7.4 0.8L0.6 8.2" stroke="#d9475b" stroke-width="1.05"/></svg><svg class="ai" style="left:1042px;top:8px" width="9.5" height="8" viewBox="0 0 9.5 8"><path d="M0.3 4H8.6M5.2 0.7L8.6 4L5.2 7.3" fill="none" stroke="#333" stroke-width="1.1"/></svg></div>
<div class="tr" style="top:403.95px"><div class="cb" style="top:5px"></div><div class="cell" style="left:29px">1013</div><div class="cell" style="left:69px">Pakkeliste - Detailpakning Spaghetti bolognese, 2 pers - ØKO (1.0)</div><div class="cell" style="left:456px">Pakkeliste</div><div class="cell" style="left:521px">Økologisk</div><div class="cell" style="left:592px;letter-spacing:.6px">Ingen</div><div class="cell" style="left:660px">08-03-2021 13:30</div><div class="cell" style="right:247px;text-align:right">10</div><div class="badge" style="left:914px;top:8px">Afsluttet</div><svg class="ai" style="left:981px;top:5px" width="14.4" height="14.4" viewBox="0 0 15 15"><g fill="none" stroke="#4a4a4a" stroke-width="1.15" stroke-linejoin="round"><path d="M3.2 0.8H11.8A2.4 2.4 0 0 1 14.2 3.2V10.8L10.8 14.2H3.2A2.4 2.4 0 0 1 0.8 11.8V3.2A2.4 2.4 0 0 1 3.2 0.8Z"/><path d="M14.2 10.8H12.3A1.5 1.5 0 0 0 10.8 12.3V14.2"/></g><text x="3" y="6" font-size="4.2" fill="#444" font-weight="bold" font-family="Liberation Sans">PDF</text></svg><svg class="ai" style="left:1000.5px;top:4.6px" width="14.6" height="14.6" viewBox="0 0 15 15"><g fill="none" stroke="#4a4a4a" stroke-width="1.15"><rect x="5.7" y="-1.6" width="3.6" height="18.2" rx="1.8" transform="rotate(45 7.5 7.5)"/><path d="M10.3 2.6L12.4 4.7"/></g></svg><svg class="ai" style="left:1023px;top:8px" width="8" height="9" viewBox="0 0 8 9"><path d="M0.6 0.8L7.4 8.2M7.4 0.8L0.6 8.2" stroke="#d9475b" stroke-width="1.05"/></svg><svg class="ai" style="left:1042px;top:8px" width="9.5" height="8" viewBox="0 0 9.5 8"><path d="M0.3 4H8.6M5.2 0.7L8.6 4L5.2 7.3" fill="none" stroke="#333" stroke-width="1.1"/></svg></div>
</div>
</body></html>
